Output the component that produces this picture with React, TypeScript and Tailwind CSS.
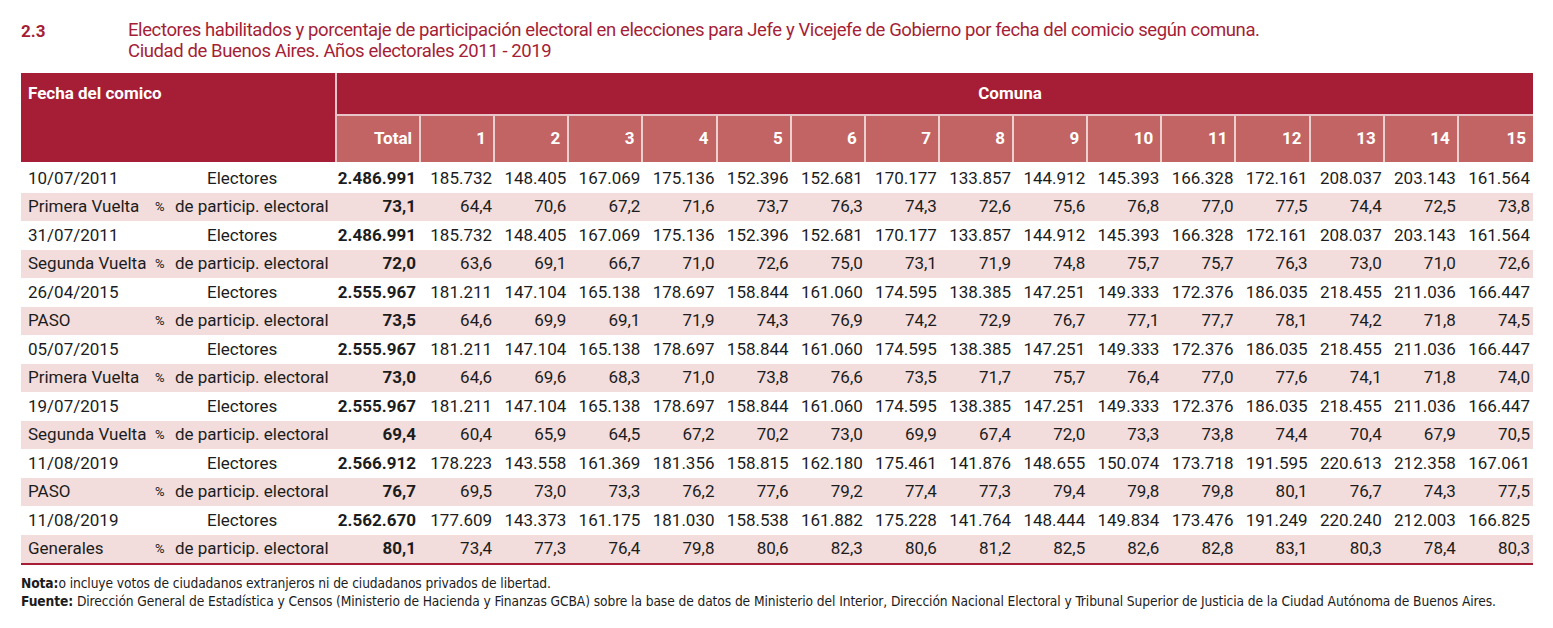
const cols = ['1', '2', '3', '4', '5', '6', '7', '8', '9', '10', '11', '12', '13', '14', '15'];

type Pair = {
  fecha: string;
  vuelta: string;
  electoresTotal: string;
  electores: string[];
  pctTotal: string;
  pct: string[];
};

const e2011 = '185.732 148.405 167.069 175.136 152.396 152.681 170.177 133.857 144.912 145.393 166.328 172.161 208.037 203.143 161.564'.split(' ');
const e2015 = '181.211 147.104 165.138 178.697 158.844 161.060 174.595 138.385 147.251 149.333 172.376 186.035 218.455 211.036 166.447'.split(' ');

const rows: Pair[] = [
  {
    fecha: '10/07/2011',
    vuelta: 'Primera Vuelta',
    electoresTotal: '2.486.991',
    electores: e2011,
    pctTotal: '73,1',
    pct: '64,4 70,6 67,2 71,6 73,7 76,3 74,3 72,6 75,6 76,8 77,0 77,5 74,4 72,5 73,8'.split(' '),
  },
  {
    fecha: '31/07/2011',
    vuelta: 'Segunda Vuelta',
    electoresTotal: '2.486.991',
    electores: e2011,
    pctTotal: '72,0',
    pct: '63,6 69,1 66,7 71,0 72,6 75,0 73,1 71,9 74,8 75,7 75,7 76,3 73,0 71,0 72,6'.split(' '),
  },
  {
    fecha: '26/04/2015',
    vuelta: 'PASO',
    electoresTotal: '2.555.967',
    electores: e2015,
    pctTotal: '73,5',
    pct: '64,6 69,9 69,1 71,9 74,3 76,9 74,2 72,9 76,7 77,1 77,7 78,1 74,2 71,8 74,5'.split(' '),
  },
  {
    fecha: '05/07/2015',
    vuelta: 'Primera Vuelta',
    electoresTotal: '2.555.967',
    electores: e2015,
    pctTotal: '73,0',
    pct: '64,6 69,6 68,3 71,0 73,8 76,6 73,5 71,7 75,7 76,4 77,0 77,6 74,1 71,8 74,0'.split(' '),
  },
  {
    fecha: '19/07/2015',
    vuelta: 'Segunda Vuelta',
    electoresTotal: '2.555.967',
    electores: e2015,
    pctTotal: '69,4',
    pct: '60,4 65,9 64,5 67,2 70,2 73,0 69,9 67,4 72,0 73,3 73,8 74,4 70,4 67,9 70,5'.split(' '),
  },
  {
    fecha: '11/08/2019',
    vuelta: 'PASO',
    electoresTotal: '2.566.912',
    electores: '178.223 143.558 161.369 181.356 158.815 162.180 175.461 141.876 148.655 150.074 173.718 191.595 220.613 212.358 167.061'.split(' '),
    pctTotal: '76,7',
    pct: '69,5 73,0 73,3 76,2 77,6 79,2 77,4 77,3 79,4 79,8 79,8 80,1 76,7 74,3 77,5'.split(' '),
  },
  {
    fecha: '11/08/2019',
    vuelta: 'Generales',
    electoresTotal: '2.562.670',
    electores: '177.609 143.373 161.175 181.030 158.538 161.882 175.228 141.764 148.444 149.834 173.476 191.249 220.240 212.003 166.825'.split(' '),
    pctTotal: '80,1',
    pct: '73,4 77,3 76,4 79,8 80,6 82,3 80,6 81,2 82,5 82,6 82,8 83,1 80,3 78,4 80,3'.split(' '),
  },
];

const grid = 'grid grid-cols-[130px_186px_84px_repeat(15,minmax(0,1fr))]';

function DataRow({ a, b, total, values, pink, pctLabel }: { a: string; b: string; total: string; values: string[]; pink?: boolean; pctLabel?: boolean }) {
  return (
    <div className={`${grid} h-[28.5px] items-center text-[17px] text-[#1c1c1c] ${pink ? 'bg-[#f2dcdc]' : ''}`}>
      <div className="pl-[7px] whitespace-nowrap">{a}</div>
      {pctLabel ? (
        <div className="flex items-center whitespace-nowrap pl-[4px]">
          <span className="text-[13px] w-[20px]">%</span>
          <span>{b}</span>
        </div>
      ) : (
        <div className="pl-[56px] whitespace-nowrap">{b}</div>
      )}
      <div className="text-right pr-[5px] font-bold">{total}</div>
      {values.map((v, i) => (
        <div key={i} className="text-right pr-[3px] whitespace-nowrap">{v}</div>
      ))}
    </div>
  );
}

export default function App() {
  return (
    <div className="w-[1553px] h-[628px] bg-white overflow-hidden" style={{ fontFamily: '"Roboto", "Noto Sans", sans-serif' }}>
      {/* Título */}
      <div className="flex pt-[20px] pl-[21px]">
        <div className="w-[107px] text-[17px] font-bold text-[#a51e36] leading-[22px]">2.3</div>
        <div className="text-[18.5px] text-[#a51e36] leading-[21px] tracking-[-0.4px]">
          Electores habilitados y porcentaje de participación electoral en elecciones para Jefe y Vicejefe de Gobierno por fecha del comicio según comuna.
          <br />
          Ciudad de Buenos Aires. Años electorales 2011 - 2019
        </div>
      </div>

      {/* Tabla */}
      <div className="mt-[11px] ml-[21px] w-[1512px]">
        <div className="flex h-[89px] bg-[#a51e36] text-white font-bold text-[17px]">
          <div className="w-[316px] shrink-0 pl-[7px] pt-[8px] border-r-2 border-[#e8c4c8]">Fecha del comico</div>
          <div className="flex-1 flex flex-col">
            <div className="h-[43px] flex items-center justify-center pl-[150px] border-b-2 border-[#e8c4c8]">Comuna</div>
            <div className="flex-1 grid grid-cols-[84px_repeat(15,minmax(0,1fr))] bg-[#c26464]">
              <div className="flex items-center justify-end pr-[7px] border-r-2 border-[#ecd0d0]">Total</div>
              {cols.map((c, i) => (
                <div key={c} className={`flex items-center justify-end pr-[7px] ${i < 14 ? 'border-r-2 border-[#ecd0d0]' : ''}`}>{c}</div>
              ))}
            </div>
          </div>
        </div>

        <div className="pt-[2px] border-b-2 border-[#a51e36]">
          {rows.map((r, i) => (
            <div key={i}>
              <DataRow a={r.fecha} b="Electores" total={r.electoresTotal} values={r.electores} />
              <DataRow a={r.vuelta} b="de particip. electoral" total={r.pctTotal} values={r.pct} pink pctLabel />
            </div>
          ))}
        </div>
      </div>

      {/* Notas */}
      <div className="ml-[21px] mt-[9px] text-[13.7px] leading-[18px] text-[#1c1c1c] tracking-[-0.1px]" style={{ fontFamily: '"Liberation Sans Narrow", "DejaVu Sans Condensed", "Roboto", sans-serif' }}>
        <div><span className="font-bold">Nota:</span>o incluye votos de ciudadanos extranjeros ni de ciudadanos privados de libertad.</div>
        <div><span className="font-bold">Fuente:</span> Dirección General de Estadística y Censos (Ministerio de Hacienda y Finanzas GCBA) sobre la base de datos de Ministerio del Interior, Dirección Nacional Electoral y Tribunal Superior de Justicia de la Ciudad Autónoma de Buenos Aires.</div>
      </div>
    </div>
  );
}
